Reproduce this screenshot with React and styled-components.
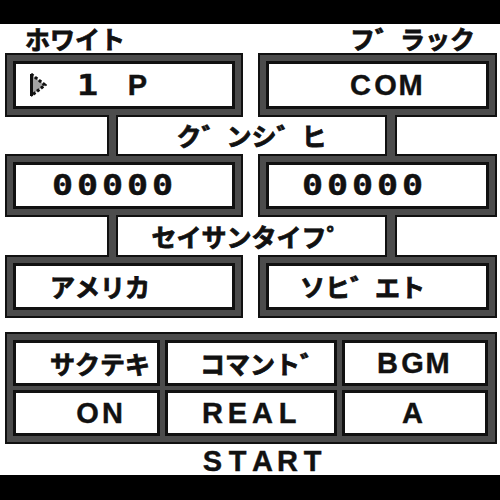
import React from 'react'
import styled, { createGlobalStyle } from 'styled-components'

const INK = '#111'
const STEEL = '#4c4c4c'

const GlobalStyle = createGlobalStyle`
  body {
    margin: 0;
    background: #000;
  }
`

function kindOf(ch) {
  if (/[0-9]/.test(ch)) return 'digit'
  if (/[A-Z]/.test(ch)) return 'latin'
  return 'kana'
}

// one character per 25px tile, like the handheld's 8x8 grid
function Tiles({ text }) {
  return (
    <TileLine>
      {[...text].map((ch, i) => (
        <Tile key={i} $kind={kindOf(ch)}>
          {ch === ' ' ? '\u00a0' : ch}
        </Tile>
      ))}
    </TileLine>
  )
}

function Cursor() {
  return (
    <CursorTile>
      <svg width="18" height="24" viewBox="0 0 18 24">
        <polygon points="2,1 16,12 2,23" fill="#a3a3a3" />
        <line x1="2.5" y1="1" x2="2.5" y2="23" stroke={INK} strokeWidth="3" />
        <polyline
          points="2,1 16,12 2,23"
          fill="none"
          stroke={INK}
          strokeWidth="3"
          strokeDasharray="3 2"
        />
      </svg>
    </CursorTile>
  )
}

function App() {
  return (
    <>
      <GlobalStyle />
      <Screen>
        <Bar $h={24} />

        <Header>
          <Tiles text="ホワイト" />
          <Tiles text="フ゛ラック" />
        </Header>

        <FrameRow $h={64}>
          <Frame>
            <Panel $pad={9}>
              <Cursor />
              <Tiles text=" 1 P" />
            </Panel>
          </Frame>
          <Frame>
            <Panel $pad={79}>
              <Tiles text="COM" />
            </Panel>
          </Frame>
        </FrameRow>

        <LinkRow $h={37}>
          <span />
          <Link />
          <Caption>
            <Tiles text="ク゛ンシ゛ヒ" />
          </Caption>
          <Link />
        </LinkRow>

        <FrameRow $h={63}>
          <Frame>
            <Panel $pad={34}>
              <Tiles text="00000" />
            </Panel>
          </Frame>
          <Frame>
            <Panel $pad={31}>
              <Tiles text="00000" />
            </Panel>
          </Frame>
        </FrameRow>

        <LinkRow $h={38}>
          <span />
          <Link />
          <Caption>
            <Tiles text="セイサンタイフ゜" />
          </Caption>
          <Link />
        </LinkRow>

        <FrameRow $h={63}>
          <Frame>
            <Panel $pad={34}>
              <Tiles text="アメリカ" />
            </Panel>
          </Frame>
          <Frame>
            <Panel $pad={31}>
              <Tiles text="ソヒ゛エト" />
            </Panel>
          </Frame>
        </FrameRow>

        <Bar $h={14} $light />

        <OptionGrid>
          <Panel $pad={34}><Tiles text="サクテキ" /></Panel>
          <Panel $pad={32}><Tiles text="コマント゛" /></Panel>
          <Panel $pad={30}><Tiles text="BGM" /></Panel>
          <Panel $pad={59}><Tiles text="ON" /></Panel>
          <Panel $pad={32}><Tiles text="REAL" /></Panel>
          <Panel $pad={55}><Tiles text="A" /></Panel>
        </OptionGrid>

        <StartRow>
          <Tiles text="START" />
        </StartRow>

        <Bar $h={25} />
      </Screen>
    </>
  )
}

const Screen = styled.div`
  width: 500px;
  height: 500px;
  display: flex;
  flex-direction: column;
  background: #fff;
  overflow: hidden;
`

const Bar = styled.div`
  flex: none;
  height: ${p => p.$h}px;
  background: ${p => (p.$light ? '#fff' : '#000')};
`

const TileLine = styled.div`
  display: flex;
`

const Tile = styled.span`
  flex: none;
  width: 25px;
  height: 25px;
  display: flex;
  align-items: center;
  justify-content: center;
  color: ${INK};
  line-height: 25px;
  font-weight: 700;
  -webkit-text-stroke: ${p => (p.$kind === 'kana' ? '0.8px' : '0.4px')} ${INK};
  font-family: ${p =>
    p.$kind === 'kana'
      ? '"Noto Sans CJK JP", sans-serif'
      : p.$kind === 'digit'
      ? '"DejaVu Sans Mono", monospace'
      : '"Liberation Sans", Arial, sans-serif'};
  font-size: ${p => (p.$kind === 'kana' ? 25 : p.$kind === 'digit' ? 28 : 29)}px;
  transform: ${p => (p.$kind === 'digit' ? 'scaleX(1.25)' : 'none')};
`

const CursorTile = styled.span`
  flex: none;
  width: 25px;
  height: 25px;
  display: flex;
  align-items: center;
  justify-content: center;
`

const Header = styled.div`
  flex: none;
  height: 29px;
  padding: 0 25px;
  display: flex;
  align-items: center;
  justify-content: space-between;
`

const FrameRow = styled.div`
  flex: none;
  height: ${p => p.$h}px;
  padding-left: 5px;
  display: grid;
  grid-template-columns: 238px 239px;
  column-gap: 15px;
`

const Frame = styled.div`
  box-sizing: border-box;
  border: 2px solid ${INK};
  background: ${STEEL};
  padding: 6px;
  display: flex;
`

const Panel = styled.div`
  flex: 1;
  box-sizing: border-box;
  border: 3px solid ${INK};
  background: #fff;
  display: flex;
  align-items: center;
  padding-left: ${p => p.$pad}px;
`

const LinkRow = styled.div`
  flex: none;
  height: ${p => p.$h}px;
  display: grid;
  grid-template-columns: 107px 11px 1fr 12px 103px;
  align-items: center;
`

const Link = styled.div`
  align-self: stretch;
  margin: -2px 0;
  position: relative;
  z-index: 1;
  background: ${STEEL};
  border-left: 2px solid ${INK};
  border-right: 2px solid ${INK};
`

const Caption = styled.div`
  display: flex;
  justify-content: center;
`

const OptionGrid = styled.div`
  flex: none;
  box-sizing: border-box;
  width: 492px;
  height: 112px;
  margin-left: 5px;
  border: 2px solid ${INK};
  background: ${STEEL};
  padding: 6px;
  display: grid;
  grid-template-columns: 147px 172px 146px;
  grid-auto-rows: 46px;
  column-gap: 5px;
  row-gap: 4px;
`

const StartRow = styled.div`
  flex: none;
  height: 31px;
  box-sizing: border-box;
  padding: 5px 0 0 200px;
`

export default App
